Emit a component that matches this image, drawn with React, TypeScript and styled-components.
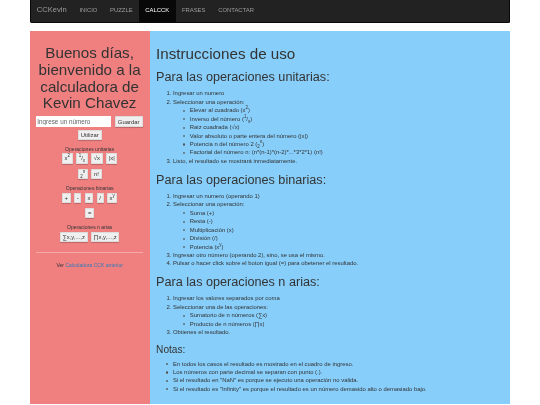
import React from 'react';
import styled, { createGlobalStyle } from 'styled-components';

const GlobalStyle = createGlobalStyle`
  html, body {
    margin: 0;
    padding: 0;
    background: #fff;
    overflow: hidden;
  }
`;

const Page = styled.div`
  zoom: 0.421875;
  width: 1280px;
  height: 960px;
  filter: blur(1px);
  font-family: "Liberation Sans", Arial, sans-serif;
  font-size: 14px;
  line-height: 20px;
  color: #333;
  sup, sub {
    font-size: 75%;
    line-height: 0;
  }
`;

const Container = styled.div`
  width: 1140px;
  margin: 0 auto;
`;

const Navbar = styled.nav`
  display: flex;
  align-items: stretch;
  height: 52px;
  background: #222;
  border: 1px solid #080808;
  border-top: 0;
  border-radius: 0 0 4px 4px;
  margin-bottom: 19px;
`;

const Brand = styled.span`
  padding: 15px;
  font-size: 18px;
  color: #9d9d9d;
`;

const NavLink = styled.a<{ $active?: boolean }>`
  padding: 15px;
  text-transform: uppercase;
  color: ${(p) => (p.$active ? '#fff' : '#9d9d9d')};
  background: ${(p) => (p.$active ? '#080808' : 'transparent')};
`;

const Columns = styled.div`
  display: grid;
  grid-template-columns: 285px 855px;
  height: 884px;
`;

const Sidebar = styled.aside`
  background: #f08080;
  padding: 0 15px;
  text-align: center;
`;

const Title = styled.h1`
  font-size: 36px;
  font-weight: 500;
  line-height: 39.6px;
  margin: 34px 0 10px;
`;

const InputRow = styled.div`
  display: flex;
  flex-wrap: wrap;
  justify-content: center;
  gap: 6px 8px;
`;

const NumberInput = styled.input`
  width: 177px;
  height: 26px;
  box-sizing: border-box;
  padding: 1px 2px;
  border: 0;
  background: #fff;
  font: 15px "Liberation Sans", Arial, sans-serif;
  color: #333;
  &::placeholder {
    color: #666;
    opacity: 1;
  }
`;

const Button = styled.button`
  height: 24px;
  box-sizing: border-box;
  padding: 0 4px;
  border: 1px solid #ddd;
  border-radius: 1px;
  background: #efefef;
  box-shadow: 0 1px 2px rgba(0, 0, 0, 0.2);
  font: 14px/20px "Liberation Sans", Arial, sans-serif;
  color: #333;
  white-space: nowrap;
`;

const SaveButton = styled(Button)`
  width: 67px;
  height: 26px;
`;

const UseButton = styled(Button)`
  width: 57px;
`;

const GroupLabel = styled.div`
  font-size: 12px;
  line-height: 14px;
  margin: 16px 0 2px;
`;

const OpRow = styled.div`
  display: flex;
  justify-content: center;
  gap: 8px;
  margin-bottom: 13px;
`;

const Divider = styled.hr`
  border: 0;
  border-top: 1px solid #f5a9a9;
  margin: 23px 0 19px;
`;

const Footnote = styled.p`
  font-size: 12px;
  margin: 0;
  a {
    color: #337ab7;
  }
`;

const Main = styled.main`
  background: #87cefa;
  padding: 0 15px;
`;

const MainTitle = styled.h1`
  font-size: 36px;
  font-weight: 500;
  line-height: 39.6px;
  margin: 36px 0 10px;
`;

const Section = styled.h2`
  font-size: 30px;
  font-weight: 500;
  line-height: 33px;
  margin: 20px 0 10px;
`;

const Notes = styled.h3`
  font-size: 24px;
  font-weight: 500;
  line-height: 26.4px;
  margin: 18px 0 10px;
`;

const Ordered = styled.ol`
  margin: 0 0 10px;
  padding-left: 40px;
`;

const Bullets = styled.ul<{ $nested?: boolean }>`
  margin: ${(p) => (p.$nested ? '0' : '0 0 10px')};
  padding-left: 40px;
  list-style: none;
  li {
    position: relative;
  }
  li::before {
    content: '';
    position: absolute;
    left: -16px;
    top: 8px;
    width: 5px;
    height: 5px;
    box-sizing: border-box;
    border-radius: 50%;
    border: 1px solid #555;
    background: ${(p) => (p.$nested ? 'transparent' : '#555')};
  }
`;

export default function App() {
  return (
    <Page>
      <GlobalStyle />
      <Container>
        <Navbar>
          <Brand>CCKevin</Brand>
          <NavLink>Inicio</NavLink>
          <NavLink>Puzzle</NavLink>
          <NavLink $active>CalcCK</NavLink>
          <NavLink>Frases</NavLink>
          <NavLink>Contactar</NavLink>
        </Navbar>
        <Columns>
          <Sidebar>
            <Title>Buenos días, bienvenido a la calculadora de Kevin Chavez</Title>
            <InputRow>
              <NumberInput placeholder="Ingrese un número" />
              <SaveButton>Guardar</SaveButton>
              <UseButton>Utilizar</UseButton>
            </InputRow>
            <GroupLabel>Operaciones unitarias</GroupLabel>
            <OpRow>
              <Button>x<sup>2</sup></Button>
              <Button><sup>1</sup>/<sub>x</sub></Button>
              <Button>√x</Button>
              <Button>|x|</Button>
            </OpRow>
            <OpRow>
              <Button><sub>2</sub><sup>n</sup></Button>
              <Button>n!</Button>
            </OpRow>
            <GroupLabel>Operaciones binarias</GroupLabel>
            <OpRow>
              <Button>+</Button>
              <Button>-</Button>
              <Button>x</Button>
              <Button>/</Button>
              <Button>x<sup>y</sup></Button>
            </OpRow>
            <OpRow>
              <Button>=</Button>
            </OpRow>
            <GroupLabel>Operaciones n arias</GroupLabel>
            <OpRow>
              <Button>∑x,y,...,z</Button>
              <Button>∏x,y,...,z</Button>
            </OpRow>
            <Divider />
            <Footnote>
              Ver <a>Calculadora CCK anterior</a>
            </Footnote>
          </Sidebar>
          <Main>
            <MainTitle>Instrucciones de uso</MainTitle>
            <Section>Para las operaciones unitarias:</Section>
            <Ordered>
              <li>Ingresar un numero</li>
              <li>
                Seleccionar una operación:
                <Bullets $nested>
                  <li>Elevar al cuadrado (x<sup>2</sup>)</li>
                  <li>Inverso del número (<sup>1</sup>/<sub>x</sub>)</li>
                  <li>Raiz cuadrada (√x)</li>
                  <li>Valor absoluto o parte entera del número (|x|)</li>
                  <li>Potencia n del número 2 (<sub>2</sub><sup>n</sup>)</li>
                  <li>Factorial del número n: (n*(n-1)*(n-2)*...*3*2*1) (n!)</li>
                </Bullets>
              </li>
              <li>Listo, el resultado se mostrará inmediatamente.</li>
            </Ordered>
            <Section>Para las operaciones binarias:</Section>
            <Ordered>
              <li>Ingresar un numero (operando 1)</li>
              <li>
                Seleccionar una operación:
                <Bullets $nested>
                  <li>Suma (+)</li>
                  <li>Resta (-)</li>
                  <li>Multiplicación (x)</li>
                  <li>División (/)</li>
                  <li>Potencia (x<sup>y</sup>)</li>
                </Bullets>
              </li>
              <li>Ingresar otro número (operando 2), sino, se usa el mismo.</li>
              <li>Pulsar o hacer click sobre el boton igual (=) para obetener el resultado.</li>
            </Ordered>
            <Section>Para las operaciones n arias:</Section>
            <Ordered>
              <li>Ingresar los valores separados por coma</li>
              <li>
                Seleccionar una de las operaciones:
                <Bullets $nested>
                  <li>Sumatorio de n números (∑x)</li>
                  <li>Producto de n números (∏x)</li>
                </Bullets>
              </li>
              <li>Obtienes el resultado.</li>
            </Ordered>
            <Notes>Notas:</Notes>
            <Bullets>
              <li>En todos los casos el resultado es mostrado en el cuadro de ingreso.</li>
              <li>Los números con parte decimal se separan con punto (.).</li>
              <li>Si el resultado en "NaN" es porque se ejecuto una operación no valida.</li>
              <li>Si el resultado es "Infinity" es porque el resultado es un número demasido alto o demasiado bajo.</li>
            </Bullets>
          </Main>
        </Columns>
      </Container>
    </Page>
  );
}
